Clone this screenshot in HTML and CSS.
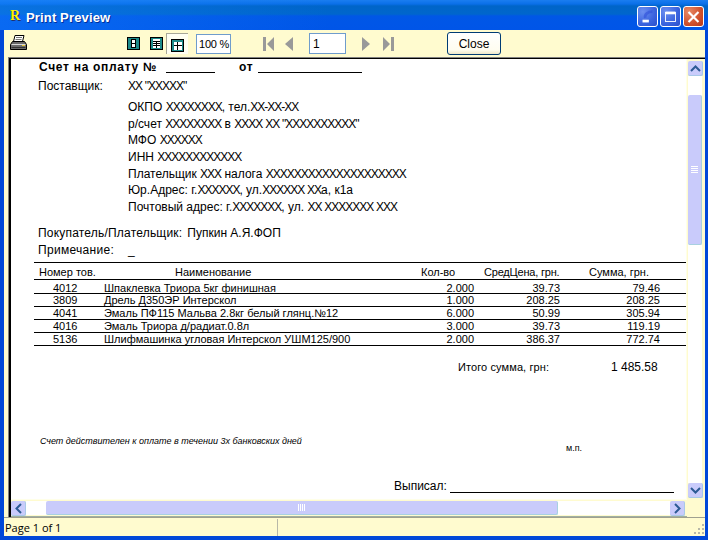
FILE: index.html
```html
<!DOCTYPE html>
<html lang="en">
<head>
    <meta charset="UTF-8">
    <title>Print Preview</title>
    <link rel="stylesheet" href="styles.css">
</head>
<body>

<div class="window">
    <header class="titlebar">
        <span class="app-icon">R</span>
        <h1>Print Preview</h1>
        <div class="controls">
            <button class="ctl ctl-blue" aria-label="Minimize">
                <svg width="21" height="20" viewBox="0 0 21 20"><rect x="5" y="13" width="7" height="3" fill="#fff"/><path d="M8 11c-1-4 3-7 8-7" fill="none" stroke="#2f50d8" stroke-width="3" opacity=".6"/></svg>
            </button>
            <button class="ctl ctl-blue" aria-label="Maximize">
                <svg width="21" height="20" viewBox="0 0 21 20"><rect x="5" y="5" width="11" height="10" fill="none" stroke="#fff" stroke-width="1"/><rect x="5" y="4" width="11" height="3" fill="#fff"/></svg>
            </button>
            <button class="ctl ctl-red" aria-label="Close">
                <svg width="21" height="20" viewBox="0 0 21 20"><path d="M5 4.500l11 11M16 4.500l-11 11" stroke="#fff" stroke-width="2.400"/></svg>
            </button>
        </div>
    </header>

    <div class="client">
        <div class="toolbar">
            <svg class="printer" width="17" height="16" viewBox="0 0 17 16">
                <path d="M5 .5h9l-1.500 6h-9z" fill="#fff" stroke="#000"/>
                <path d="M6 2.500h6M5.500 4.500h6" stroke="#777"/>
                <path d="M2.500 6.500h12l2 3v5H.5v-5z" fill="#6a6a6a" stroke="#000"/>
                <path d="M1.500 9.500h14" stroke="#d8d8d8"/>
                <path d="M1.500 12.500h14" stroke="#333"/>
                <rect x="12" y="10" width="3" height="1" fill="#e8c832"/>
            </svg>

            <div class="view-buttons">
                <span class="view-btn">
                    <svg width="13" height="13" viewBox="0 0 13 13"><rect x=".5" y=".5" width="12" height="12" class="pg"/><rect x="4.500" y="2.500" width="4" height="8" fill="#fff" stroke="#000"/><path d="M5 6.500h3" stroke="#000"/></svg>
                </span>
                <span class="view-btn">
                    <svg width="13" height="13" viewBox="0 0 13 13"><rect x=".5" y=".5" width="12" height="12" class="pg"/><rect x="3" y="2" width="7" height="9" fill="#fff"/><path d="M3 4.500h7M3 6.500h7M3 8.500h7M6.500 4v7" stroke="#000"/></svg>
                </span>
                <span class="view-btn view-btn-on">
                    <svg width="13" height="13" viewBox="0 0 13 13"><rect x=".5" y=".5" width="12" height="12" class="pg"/><rect x="3" y="3" width="8" height="8" fill="#fff"/><path d="M3 6.500h8M6.500 3v8" stroke="#000"/></svg>
                </span>
            </div>

            <input class="field field-zoom" value="100 %">

            <div class="pager">
                <svg width="12" height="14" viewBox="0 0 12 14"><path d="M0 0h3v14H0zM11 0v14L4 7z" fill="#999"/></svg>
                <svg class="prev" width="8" height="14" viewBox="0 0 8 14"><path d="M8 0v14L0 7z" fill="#999"/></svg>
                <input class="field field-page" value="1">
                <svg class="next" width="8" height="14" viewBox="0 0 8 14"><path d="M0 0v14l8-7z" fill="#999"/></svg>
                <svg class="last" width="11" height="14" viewBox="0 0 11 14"><path d="M0 0v14l7-7zM8 0h3v14H8z" fill="#999"/></svg>
            </div>

            <button class="close-btn">Close</button>
        </div>

        <div class="preview">
            <div class="sheet">
                <div class="doc-title">
                    <span>Счет на оплату №</span>
                    <span class="blank blank-num"></span>
                    <span class="doc-from">от</span>
                    <span class="blank blank-date"></span>
                </div>

                <div class="row-label supplier">
                    <span class="label">Поставщик:</span>
                    <span class="x">XX "XXXXX"</span>
                </div>

                <ul class="details">
                    <li>ОКПО <span class="x">XXXXXXXX</span>, тел.<span class="x">XX-XX-XX</span></li>
                    <li>р/счет <span class="x">XXXXXXXX</span> в <span class="x">XXXX XX "XXXXXXXXXX"</span></li>
                    <li>МФО <span class="x">XXXXXX</span></li>
                    <li>ИНН <span class="x">XXXXXXXXXXXX</span></li>
                    <li>Плательщик <span class="x">XXX</span> налога <span class="x">XXXXXXXXXXXXXXXXXXXX</span></li>
                    <li>Юр.Адрес: г.<span class="x">XXXXXX</span>, ул.<span class="x">XXXXXX XX</span>а, к1а</li>
                    <li>Почтовый адрес: г.<span class="x">XXXXXXX</span>, ул. <span class="x">XX XXXXXXX XXX</span></li>
                </ul>

                <div class="buyer"><span>Покупатель/Плательщик:</span><span class="buyer-name">Пупкин А.Я.ФОП</span></div>
                <div class="row-label note">
                    <span class="label">Примечание:</span>
                    <span>_</span>
                </div>

                <div class="items">
                    <div class="item item-head">
                        <span class="c-head-no">Номер тов.</span>
                        <span class="c-head-name">Наименование</span>
                        <span class="c-head-qty">Кол-во</span>
                        <span class="c-head-price">СредЦена, грн.</span>
                        <span class="c-head-sum">Сумма, грн.</span>
                    </div>
                    <div class="item"><span class="c-no">4012</span><span>Шпаклевка Триора 5кг финишная</span><span class="num">2.000</span><span class="num">39.73</span><span class="num">79.46</span></div>
                    <div class="item"><span class="c-no">3809</span><span>Дрель Д350ЭР Интерскол</span><span class="num">1.000</span><span class="num">208.25</span><span class="num">208.25</span></div>
                    <div class="item"><span class="c-no">4041</span><span>Эмаль ПФ115 Мальва 2.8кг белый глянц.№12</span><span class="num">6.000</span><span class="num">50.99</span><span class="num">305.94</span></div>
                    <div class="item"><span class="c-no">4016</span><span>Эмаль Триора д/радиат.0.8л</span><span class="num">3.000</span><span class="num">39.73</span><span class="num">119.19</span></div>
                    <div class="item"><span class="c-no">5136</span><span>Шлифмашинка угловая Интерскол УШМ125/900</span><span class="num">2.000</span><span class="num">386.37</span><span class="num">772.74</span></div>
                </div>

                <div class="total"><span class="total-label">Итого сумма, грн:</span><span class="total-val">1 485.58</span></div>

                <div class="footnote">
                    <span class="valid">Счет действителен к оплате в течении 3х банковских дней</span>
                    <span class="stamp">м.п.</span>
                </div>

                <div class="signed"><span>Выписал:</span><span class="blank blank-sign"></span></div>
            </div>

            <div class="vscroll">
                <span class="sb-btn">
                    <svg width="11" height="7" viewBox="0 0 11 7"><path d="M1 6l4.500-4.500L10 6" fill="none" stroke="#2c5a94" stroke-width="2"/></svg>
                </span>
                <div class="sb-track">
                    <div class="sb-thumb sb-thumb-v">
                        <svg width="7" height="8" viewBox="0 0 7 8"><path d="M0 .5h7M0 2.500h7M0 4.500h7M0 6.500h7" stroke="#fff"/></svg>
                    </div>
                </div>
                <span class="sb-btn">
                    <svg width="11" height="7" viewBox="0 0 11 7"><path d="M1 1l4.500 4.500L10 1" fill="none" stroke="#2c5a94" stroke-width="2"/></svg>
                </span>
            </div>

            <div class="hscroll">
                <span class="sb-btn">
                    <svg width="7" height="11" viewBox="0 0 7 11"><path d="M6 1L1.500 5.500 6 10" fill="none" stroke="#2c5a94" stroke-width="2"/></svg>
                </span>
                <div class="sb-track sb-track-h">
                    <div class="sb-thumb sb-thumb-h">
                        <svg width="8" height="7" viewBox="0 0 8 7"><path d="M.5 0v7M2.500 0v7M4.500 0v7M6.500 0v7" stroke="#fff"/></svg>
                    </div>
                </div>
                <span class="sb-btn">
                    <svg width="7" height="11" viewBox="0 0 7 11"><path d="M1 1l4.500 4.500L1 10" fill="none" stroke="#2c5a94" stroke-width="2"/></svg>
                </span>
            </div>
        </div>

        <footer class="statusbar">
            <span class="status-cell">Page 1 of 1</span>
            <svg class="grip" width="11" height="11" viewBox="0 0 11 11"><path d="M8 0h2v2H8zM4 4h2v2H4zM8 4h2v2H8zM0 8h2v2H0zM4 8h2v2H4zM8 8h2v2H8z" fill="#b8b8a8"/></svg>
        </footer>
    </div>
</div>

</body>
</html>
```

FILE: styles.css
```css
:root {
    --cream: #FFFBCF;
    --thumb: #C9CBFB;
    --ink: #000;
}

* {
    margin: 0;
    padding: 0;
    box-sizing: border-box;
}

body {
    width: 708px;
    height: 540px;
    overflow: hidden;
    font-family: 'Liberation Sans', sans-serif;
    background: #0055E5;
}

.window {
    width: 708px;
    height: 540px;
    display: flex;
    flex-direction: column;
    background: #0047D8;
}

/* Title bar */
.titlebar {
    flex: 0 0 30px;
    display: flex;
    align-items: center;
    padding: 3px 4px 0 10px;
    background:
        linear-gradient(90deg, rgba(20, 130, 255, 0.45) 0, rgba(20, 130, 255, 0) 330px),
        linear-gradient(180deg, #1A7DF0 0, #0A6FE8 4px, #0065C8 6px, #0066CC 14px, #0057E6 16px, #0055E8 30px);
}

.app-icon {
    width: 16px;
    margin-top: -1px;
    font-family: 'Liberation Serif', serif;
    font-weight: bold;
    font-size: 14px;
    color: #FFF200;
    text-shadow: 1px 1px 0 #203070;
}

.titlebar h1 {
    padding-top: 1px;
    font-size: 13px;
    font-weight: bold;
    color: #fff;
    letter-spacing: 0.15px;
    text-shadow: 1px 1px 0 #00309C;
}

.controls {
    margin-left: auto;
    display: flex;
    gap: 2px;
}

.ctl {
    width: 21px;
    height: 21px;
    border: 1px solid #fff;
    border-radius: 3px;
    display: flex;
    align-items: center;
    justify-content: center;
    overflow: hidden;
}

.ctl-blue {
    background: radial-gradient(circle at 25% 25%, #6C8FF0, #3A63DE 60%, #2A4FCB);
}

.ctl-red {
    background: radial-gradient(circle at 25% 25%, #E88A66, #D0502C 60%, #B83A1C);
}

/* Client area */
.client {
    flex: 1;
    margin: 0 3px 4px 4px;
    display: flex;
    flex-direction: column;
    background: var(--cream);
}

.toolbar {
    flex: 0 0 27px;
    display: flex;
    align-items: center;
    position: relative;
}

.printer {
    margin-left: 6px;
    margin-top: -2px;
}

.view-buttons {
    margin-left: 100px;
    display: flex;
    align-items: center;
    gap: 10px;
}

.view-btn {
    display: flex;
    align-items: center;
    justify-content: center;
    width: 13px;
    height: 13px;
}

.view-btn-on {
    width: 22px;
    height: 21px;
    margin-left: -7px;
    padding-top: 3px;
    background: #FFFFF2;
    border-top: 1px solid #A8A898;
    border-left: 1px solid #A8A898;
}

.pg {
    fill: #1C8A8A;
    stroke: #000;
}

.field {
    height: 20px;
    border: 1px solid #6F9CCC;
    background: #fff;
    color: var(--ink);
    font-family: 'Liberation Sans', sans-serif;
    font-size: 12px;
    padding-left: 3px;
}

.field-zoom {
    width: 35px;
    margin-left: 8px;
    padding-left: 2px;
    font-size: 11px;
    letter-spacing: -0.2px;
}

.pager {
    margin-left: 32px;
    display: flex;
    align-items: center;
}

.prev {
    margin-left: 10px;
}

.field-page {
    width: 37px;
    margin-left: 16px;
    height: 21px;
}

.next {
    margin-left: 16px;
}

.last {
    margin-left: 13px;
}

.close-btn {
    width: 54px;
    height: 23px;
    margin-left: 53px;
    background: linear-gradient(180deg, #fff, #FFFDF0 80%, #EFE8C8);
    border: 1px solid #003C74;
    border-radius: 3px;
    font-family: 'Liberation Sans', sans-serif;
    font-size: 12px;
    color: var(--ink);
}

/* Preview frame */
.preview {
    flex: 0 0 460px;
    margin-left: 4px;
    display: grid;
    grid-template-columns: 1fr 18px;
    grid-template-rows: 1fr 18px;
    border-top: 1px solid #808080;
    border-left: 1px solid #808080;
    box-shadow: inset 2px 1px 0 #000;
}

.sheet {
    margin: 1px 0 0 2px;
    background: #fff;
    overflow: hidden;
    padding-left: 23px;
    font-size: 12px;
    color: var(--ink);
    border-right: 1px solid #FFFFE8;
}

.doc-title {
    display: flex;
    height: 15px;
    margin-left: 5px;
    font-weight: bold;
    align-items: center;
    letter-spacing: 0.7px;
}

.blank {
    display: block;
    border-bottom: 1px solid #000;
}

.blank-num {
    width: 49px;
    height: 13px;
    margin-left: 9px;
}

.doc-from {
    margin-left: 24px;
}

.blank-date {
    width: 104px;
    height: 13px;
    margin-left: 5px;
}

.row-label {
    display: flex;
    margin-left: 4px;
}

.label {
    width: 90px;
}

/* placeholder X runs are set tight in the report */
.x {
    letter-spacing: -1px;
    word-spacing: 0.5px;
}

.supplier {
    margin-top: 5px;
}

.details {
    list-style: none;
    margin: 6px 0 0 94px;
}

.details li {
    height: 16.670px;
    line-height: 16px;
}

.buyer {
    display: flex;
    gap: 5px;
    margin: 10px 0 0 4px;
    letter-spacing: 0.2px;
}

.buyer-name {
    letter-spacing: 0;
}

.note {
    margin-top: 3px;
    letter-spacing: 0.3px;
}

.items {
    margin-top: 5px;
    border-top: 1px solid #000;
}

.item {
    display: grid;
    grid-template-columns: 70px 300px 70px 86px 100px;
    height: 13px;
    line-height: 13px;
    border-bottom: 1px solid #000;
    font-size: 11px;
}

.item-head {
    height: 17px;
    line-height: 19px;
    position: relative;
    display: flex;
}

.item-head + .item {
    height: 14px;
    line-height: 16px;
}

.c-head-no {
    margin-left: 5px;
    width: 136px;
}

.c-head-name {
    width: 246px;
}

.c-head-qty {
    width: 63px;
}

.c-head-price {
    width: 105px;
    letter-spacing: -0.2px;
}

.c-no {
    padding-left: 19px;
}

.num {
    text-align: right;
}

.total {
    display: flex;
    margin: 14px 0 0 424px;
    font-size: 11px;
    align-items: center;
}

.total-label {
    width: 153px;
    letter-spacing: 0.1px;
}

.total-val {
    font-size: 12px;
}

.footnote {
    display: flex;
    margin: 62px 0 0 6px;
    font-size: 9px;
}

.valid {
    font-style: italic;
    width: 526px;
}

.stamp {
    margin-top: 7px;
}

.signed {
    display: flex;
    margin: 26px 0 0 360px;
}

.blank-sign {
    width: 224px;
    height: 14px;
    margin-left: 3px;
}

/* Scrollbars */
.vscroll {
    grid-row: 1 / 3;
    grid-column: 2;
    display: flex;
    flex-direction: column;
    padding: 3px 3px 19px 1px;
}

.hscroll {
    grid-row: 2;
    grid-column: 1;
    margin-left: 2px;
    display: flex;
    padding: 1px 2px 1px 0;
    border-top: 1px solid #FFFFE8;
    border-bottom: 1px solid #A0B0A0;
}

.sb-btn {
    flex: 0 0 15px;
    width: 15px;
    height: 15px;
    display: flex;
    align-items: center;
    justify-content: center;
    background: var(--thumb);
    border-right: 1px solid #A8C8E8;
    border-bottom: 1px solid #A8C8E8;
    border-radius: 2px;
}

.sb-track {
    flex: 1;
    background: #fff;
    display: flex;
    flex-direction: column;
}

.sb-track-h {
    flex-direction: row;
}

.sb-thumb {
    background: var(--thumb);
    display: flex;
    align-items: center;
    justify-content: center;
    border-right: 1px solid #A8D0E0;
    border-bottom: 1px solid #A8D0E0;
    border-radius: 2px;
}

.sb-thumb-v {
    height: 150px;
    margin-top: 19px;
}

.sb-thumb-h {
    width: 512px;
    margin-left: 20px;
}

/* Status bar */
.statusbar {
    flex: 1;
    display: flex;
    align-items: center;
    position: relative;
    border-top: 1px solid #A0A090;
    font-family: 'Open Sans', sans-serif;
    font-size: 11px;
    color: var(--ink);
}

.status-cell {
    width: 274px;
    height: 17px;
    line-height: 17px;
    padding-left: 1px;
    border-right: 1px solid #B8B8A8;
}

.grip {
    position: absolute;
    right: 0;
    bottom: 1px;
}
```
